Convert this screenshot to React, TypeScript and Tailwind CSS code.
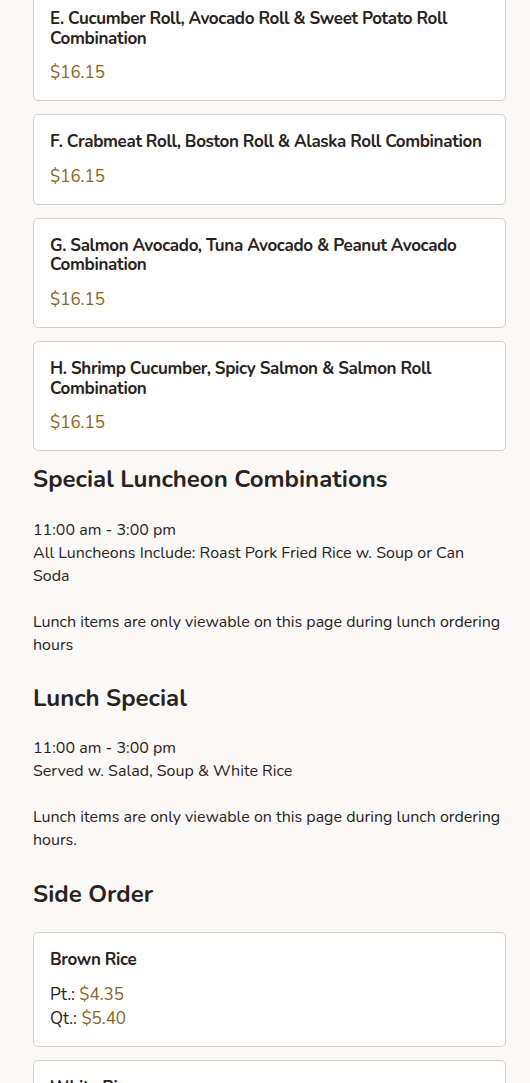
import React from "react";

const font = { fontFamily: "Nunito, Lato, 'Open Sans', sans-serif" };

const Price = ({ v }: { v: string }) => <span className="text-[#8a6524]">{v}</span>;

function Card({ title, children }: { title: string; children: React.ReactNode }) {
  return (
    <div className="bg-white border border-[#d3cfcb] rounded-[5px] px-4 pt-[17px] pb-[15px]">
      <div className="text-[17px] leading-[19.5px] font-bold text-[#2a221d] tracking-[-0.35px]">{title}</div>
      <div className="mt-[13.2px] text-[17px] leading-[24px]">{children}</div>
    </div>
  );
}

export default function App() {
  const combos = [
    "E. Cucumber Roll, Avocado Roll & Sweet Potato Roll Combination",
    "F. Crabmeat Roll, Boston Roll & Alaska Roll Combination",
    "G. Salmon Avocado, Tuna Avocado & Peanut Avocado Combination",
    "H. Shrimp Cucumber, Spicy Salmon & Salmon Roll Combination",
  ];
  return (
    <div className="min-h-screen bg-[#faf9f8] text-[#2a221d]" style={font}>
      <div className="pl-[33px] pr-[24px] w-[530px] -mt-[9px] pb-10">
        <div className="flex flex-col gap-[13px]">
          {combos.map((c) => (
            <Card key={c} title={c}>
              <Price v="$16.15" />
            </Card>
          ))}
        </div>

        <h2 className="mt-[12px] text-[24px] leading-[32px] font-bold">Special Luncheon Combinations</h2>
        <div className="mt-[24px] pr-[3px] text-[16px] leading-[23px]">
          <p>11:00 am - 3:00 pm</p>
          <p>All Luncheons Include: Roast Pork Fried Rice w. Soup or Can Soda</p>
          <p className="mt-[23px]">Lunch items are only viewable on this page during lunch ordering hours</p>
        </div>

        <h2 className="mt-[25px] text-[24px] leading-[32px] font-bold">Lunch Special</h2>
        <div className="mt-[23px] pr-[3px] text-[16px] leading-[23px]">
          <p>11:00 am - 3:00 pm</p>
          <p>Served w. Salad, Soup &amp; White Rice</p>
          <p className="mt-[23px]">Lunch items are only viewable on this page during lunch ordering hours.</p>
        </div>

        <h2 className="mt-[26px] text-[24px] leading-[32px] font-bold">Side Order</h2>
        <div className="mt-[22px] flex flex-col gap-[13px]">
          {["Brown Rice", "White Rice"].map((t) => (
            <div key={t} className="bg-white border border-[#d3cfcb] rounded-[5px] px-4 pt-[17px] pb-[15px]">
              <div className="text-[17px] leading-[19.5px] font-bold tracking-[-0.35px]">{t}</div>
              <div className="mt-[13.2px] text-[17px] leading-[24px]">
                <div>Pt.: <Price v="$4.35" /></div>
                <div>Qt.: <Price v="$5.40" /></div>
              </div>
            </div>
          ))}
        </div>
      </div>
    </div>
  );
}
